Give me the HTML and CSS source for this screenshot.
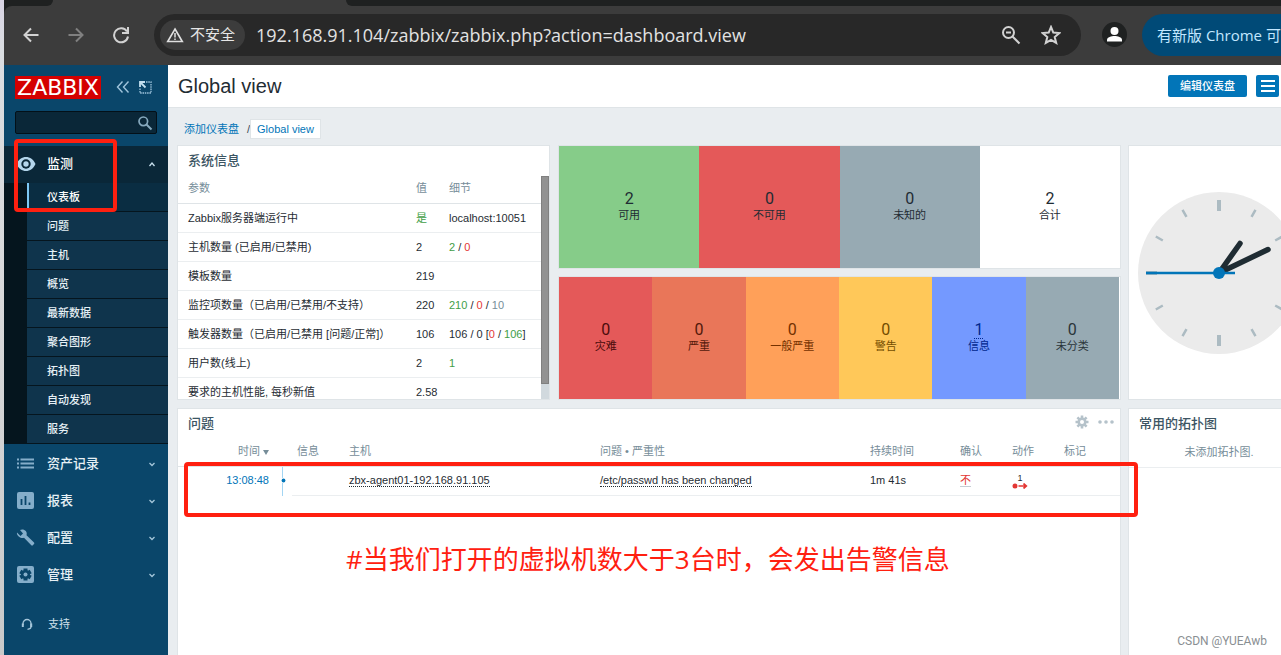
FILE: index.html
```html
<!DOCTYPE html>
<html lang="zh-CN">
<head>
<meta charset="utf-8">
<title>Global view</title>
<link rel="stylesheet" href="styles.css">
</head>
<body>
<div class="desktop">
<div class="behind"></div>
<div class="browser">
  <header class="chrome">
    <div class="tabstrip"><span class="tab-prev"></span><span class="tab-active"></span><span class="tab-rest"></span></div>
    <div class="toolbar">
      <div class="nav-buttons">
        <button class="icon-btn" aria-label="后退"><svg width="18" height="18" viewBox="0 0 18 18"><path d="M16.500 9H3M9 2.500L2.500 9L9 15.500" fill="none" stroke="#d2d2d2" stroke-width="2"/></svg></button>
        <button class="icon-btn" aria-label="前进"><svg width="18" height="18" viewBox="0 0 18 18"><path d="M1.500 9h13.500M9 2.500L15.500 9L9 15.500" fill="none" stroke="#808080" stroke-width="2"/></svg></button>
        <button class="icon-btn" aria-label="重新加载"><svg width="18" height="18" viewBox="0 0 18 18"><path d="M15 5.500A7 7 0 1 0 16 10.500" fill="none" stroke="#d2d2d2" stroke-width="2"/><path d="M16 1v6H10" fill="none" stroke="#d2d2d2" stroke-width="2"/></svg></button>
      </div>
      <div class="address">
        <button class="chip"><svg width="18" height="16" viewBox="0 0 18 16"><path d="M9 2L16.300 14.500H1.700Z" fill="none" stroke="#e0e0e0" stroke-width="1.600"/><path d="M9 6v4.500M9 11.500v1.500" stroke="#e0e0e0" stroke-width="1.500"/></svg><span>不安全</span></button>
        <span class="url">192.168.91.104/zabbix/zabbix.php?action=dashboard.view</span>
        <button class="icon-btn" aria-label="缩放"><svg width="20" height="20" viewBox="0 0 20 20"><g fill="none" stroke="#d2d2d2" stroke-width="2"><circle cx="7.500" cy="7.500" r="5.500"/><path d="M11.500 11.500l7 7"/><path d="M5 7.500h5"/></g></svg></button>
        <button class="icon-btn" aria-label="收藏"><svg width="20" height="20" viewBox="0 0 20 20"><path d="M10 2l2.300 5.600 6 .5-4.600 3.900 1.500 5.900L10 14.800 4.800 17.900l1.500-5.900L1.700 8.100l6-.5z" fill="none" stroke="#d2d2d2" stroke-width="2"/></svg></button>
      </div>
      <button class="icon-btn avatar" aria-label="个人资料"><svg width="25" height="25" viewBox="0 0 25 25"><circle cx="12.500" cy="12.500" r="12.500" fill="#1f2121"/><circle cx="12.500" cy="9" r="4" fill="#fff"/><path d="M5 19.500v-1.500c0-3 4.500-4 7.500-4s7.500 1 7.500 4v1.500z" fill="#fff"/></svg></button>
      <button class="update">有新版 Chrome 可</button>
    </div>
  </header>

  <div class="app">
    <aside class="sidebar">
      <div class="brand">
        <a class="logo" href="#">ZABBIX</a>
        <button class="icon-btn" aria-label="收起"><svg width="14" height="14" viewBox="0 0 14 14"><path d="M6.500 1.500L1.500 7l5 5.500M12.500 1.500L7.500 7l5 5.500" fill="none" stroke="#9fc4dc" stroke-width="1.400"/></svg></button>
        <button class="icon-btn" aria-label="隐藏"><svg width="13" height="13" viewBox="0 0 13 13"><path d="M7 1h5v11H1V7" fill="none" stroke="#9fc4dc" stroke-width="1.300" stroke-dasharray="1.500 .8"/><path d="M1 6V1H6" fill="none" stroke="#c4e0f0" stroke-width="1.800"/><path d="M1.500 1.500l5 5" stroke="#c4e0f0" stroke-width="1.800"/></svg></button>
      </div>
      <form class="search"><input type="text" aria-label="搜索"><button type="button" class="icon-btn" aria-label="搜索"><svg width="16" height="16" viewBox="0 0 16 16"><circle cx="6.300" cy="6.300" r="4.300" fill="none" stroke="#86a9be" stroke-width="1.700"/><path d="M9.500 9.500l5 5" stroke="#86a9be" stroke-width="2"/></svg></button></form>
      <nav class="menu">
        <div class="mark mark-menu"></div>
        <a class="item open" href="#"><svg class="ico" width="20" height="18" viewBox="0 0 20 18"><path d="M0.500 9C2.500 4.500 6 2 10 2s7.500 2.500 9.500 7c-2 4.500-5.500 7-9.500 7S2.500 13.500.5 9z" fill="#b4d6ec"/><circle cx="10" cy="9" r="4.700" fill="#0a2738"/><circle cx="10" cy="9" r="2.700" fill="#b4d6ec"/></svg><span>监测</span><svg class="arrow" width="8" height="6" viewBox="0 0 8 6"><path d="M1.500 5L4 2l2.500 3" fill="none" stroke="#c8e0ee" stroke-width="1.300"/></svg></a>
        <ul class="submenu">
          <li><a class="current" href="#">仪表板</a></li><li><a href="#">问题</a></li><li><a href="#">主机</a></li><li><a href="#">概览</a></li><li><a href="#">最新数据</a></li><li><a href="#">聚合图形</a></li><li><a href="#">拓扑图</a></li><li><a href="#">自动发现</a></li><li><a href="#">服务</a></li>
        </ul>
        <div class="rest">
        <a class="item" href="#"><svg class="ico" width="20" height="18" viewBox="0 0 20 18"><path d="M1 4.500h2M1 8.500h2M1 12.500h2M4.500 4.500H18M4.500 8.500H18M4.500 12.500H18" stroke="#85aeca" stroke-width="1.800"/></svg><span>资产记录</span><svg class="arrow" width="8" height="6" viewBox="0 0 8 6"><path d="M1.500 2L4 4.500 6.500 2" fill="none" stroke="#a5c6da" stroke-width="1.300"/></svg></a>
        <a class="item" href="#"><svg class="ico" width="20" height="18" viewBox="0 0 20 18"><rect x="1" y="0" width="17" height="17" rx="2" fill="#85aeca"/><path d="M5.500 7v6M9.500 4v9M13.500 10.500V13" stroke="#0a466a" stroke-width="1.800"/></svg><span>报表</span><svg class="arrow" width="8" height="6" viewBox="0 0 8 6"><path d="M1.500 2L4 4.500 6.500 2" fill="none" stroke="#a5c6da" stroke-width="1.300"/></svg></a>
        <a class="item" href="#"><svg class="ico" width="20" height="18" viewBox="0 0 20 18"><path d="M1 3.500L4.500 7 7 4.500 4 1c2-1 4.500-.5 5.800 1 1 1.300 1.200 2.700.7 4.200l7.500 7.300c.5.500.5 1 0 1.500l-1.200 1.300c-.5.500-1 .5-1.500 0L8 8.800c-1.600.6-3.600.2-5-1.100C1.500 6.500.5 5 1 3.500z" fill="#85aeca"/></svg><span>配置</span><svg class="arrow" width="8" height="6" viewBox="0 0 8 6"><path d="M1.500 2L4 4.500 6.500 2" fill="none" stroke="#a5c6da" stroke-width="1.300"/></svg></a>
        <a class="item" href="#"><svg class="ico" width="20" height="18" viewBox="0 0 20 18"><rect x="1" y="0" width="17" height="17" rx="2" fill="#85aeca"/><g stroke="#0a466a" stroke-width="4"><path d="M9.500 2.500v12M4.300 5.500l10.400 6M14.700 5.500l-10.400 6"/></g><circle cx="9.500" cy="8.500" r="4.500" fill="#0a466a"/><circle cx="9.500" cy="8.500" r="2" fill="#85aeca"/></svg><span>管理</span><svg class="arrow" width="8" height="6" viewBox="0 0 8 6"><path d="M1.500 2L4 4.500 6.500 2" fill="none" stroke="#a5c6da" stroke-width="1.300"/></svg></a>
        </div>
      </nav>
      <a class="support" href="#"><svg width="12" height="12" viewBox="0 0 12 12"><path d="M2 7V5.500a4 4 0 0 1 8 0V9c0 1.500-1 2-3.500 2.300" fill="none" stroke="#a5c6da" stroke-width="1.300"/><path d="M1.800 5.500v3.500M10.200 5.500v3.500" stroke="#a5c6da" stroke-width="2"/></svg><span>支持</span></a>
    </aside>

    <main class="main">
      <div class="page-head"><h1>Global view</h1><button class="primary">编辑仪表盘</button><button class="primary square" aria-label="菜单"><svg width="14" height="12" viewBox="0 0 14 12"><path d="M0 1h14M0 6h14M0 11h14" stroke="#fff" stroke-width="2"/></svg></button></div>
      <div class="crumbs"><a href="#">添加仪表盘</a><span class="slash">/</span><a class="selected" href="#">Global view</a></div>
      <div class="dashboard">
        <section class="card sysinfo">
          <h2>系统信息</h2>
          <div class="scroller">
            <table class="info">
              <thead><tr><th>参数</th><th class="val">值</th><th class="det">细节</th></tr></thead>
              <tbody>
                <tr><td>Zabbix服务器端运行中</td><td class="green">是</td><td>localhost:10051</td></tr>
                <tr><td>主机数量 (已启用/已禁用)</td><td>2</td><td><span class="green">2</span> / <span class="red">0</span></td></tr>
                <tr><td>模板数量</td><td>219</td><td></td></tr>
                <tr><td>监控项数量（已启用/已禁用/不支持）</td><td>220</td><td><span class="green">210</span> / <span class="red">0</span> / <span class="grey">10</span></td></tr>
                <tr><td>触发器数量（已启用/已禁用 [问题/正常]）</td><td>106</td><td>106 / 0 [<span class="red">0</span> / <span class="green">106</span>]</td></tr>
                <tr><td>用户数(线上)</td><td>2</td><td class="green">1</td></tr>
                <tr><td>要求的主机性能, 每秒新值</td><td>2.58</td><td></td></tr>
              </tbody>
            </table>
            <div class="track"><div class="thumb"></div></div>
          </div>
        </section>
        <div class="stats">
          <section class="card tiles hosts">
            <div class="tile ok"><b>2</b><span>可用</span></div><div class="tile bad"><b>0</b><span>不可用</span></div><div class="tile unknown"><b>0</b><span>未知的</span></div><div class="tile total"><b>2</b><span>合计</span></div>
          </section>
          <section class="card tiles severity">
            <div class="tile disaster"><b>0</b><span>灾难</span></div><div class="tile high"><b>0</b><span>严重</span></div><div class="tile average"><b>0</b><span>一般严重</span></div><div class="tile warning"><b>0</b><span>警告</span></div><div class="tile information"><b><a href="#">1</a></b><span>信息</span></div><div class="tile none"><b>0</b><span>未分类</span></div>
          </section>
        </div>
        <section class="card clock">
          <svg width="162" height="162" viewBox="-81 -81 162 162"><circle r="81" fill="#ebebeb"/>
            <g stroke="#acbbc2" stroke-width="4"><path d="M0-73V-62M0 73V62M-73 0H-62M73 0H62"/></g>
            <g stroke="#acbbc2" stroke-width="2.500"><path d="M36.500-63.200l-4 7M63.200-36.500l-7 4M63.200 36.500l-7-4M36.500 63.200l-4-7M-36.500 63.200l4-7M-63.200 36.500l7-4M-63.200-36.500l7 4M-36.500-63.200l4 7"/></g>
            <path d="M0 0L21-29.500M0 0L49-23.500" stroke="#1f2c33" stroke-width="5.500" stroke-linecap="round"/>
            <path d="M-73 0H16" stroke="#0275b8" stroke-width="2.500"/><circle r="6" fill="#0275b8"/></svg>
        </section>
        <section class="card problems">
          <div class="card-head"><h2>问题</h2>
            <button class="icon-btn" aria-label="设置"><svg width="14" height="14" viewBox="0 0 14 14"><g stroke="#b5c2ca" stroke-width="2.600"><path d="M7 .5v13M.5 7h13M2.400 2.400l9.200 9.200M11.600 2.400l-9.200 9.200"/></g><circle cx="7" cy="7" r="4.500" fill="#b5c2ca"/><circle cx="7" cy="7" r="2" fill="#fff"/></svg></button>
            <button class="icon-btn" aria-label="更多"><svg width="16" height="4" viewBox="0 0 16 4"><g fill="#b5c2ca"><circle cx="2" cy="2" r="1.800"/><circle cx="8" cy="2" r="1.800"/><circle cx="14" cy="2" r="1.800"/></g></svg></button>
          </div>
          <table class="events">
            <colgroup><col class="c-time"><col class="c-line"><col class="c-info"><col class="c-host"><col class="c-problem"><col class="c-age"><col class="c-ack"><col class="c-act"><col></colgroup>
            <thead><tr><th class="time">时间<span class="sort"></span></th><th></th><th>信息</th><th>主机</th><th>问题 • 严重性</th><th>持续时间</th><th>确认</th><th>动作</th><th>标记</th></tr></thead>
            <tbody><tr><td class="time"><a class="blue" href="#">13:08:48</a></td><td class="line"><svg width="5" height="29" viewBox="0 0 5 29"><path d="M1.500 0v29" stroke="#a3d5f3"/><circle cx="2.500" cy="13.500" r="2.700" fill="#fff"/><circle cx="2.500" cy="13.500" r="1.900" fill="#0275b8"/></svg></td><td></td><td><a class="dotted" href="#">zbx-agent01-192.168.91.105</a></td><td><a class="dotted" href="#">/etc/passwd has been changed</a></td><td>1m 41s</td><td><a class="ack" href="#">不</a></td><td><div class="action"><span class="count">1</span><svg width="16" height="6" viewBox="0 0 16 6"><circle cx="3" cy="3" r="2.500" fill="#e33734"/><path d="M6.500 3h7M11.500 .5L14.300 3l-2.800 2.500" fill="none" stroke="#e33734" stroke-width="1.700"/></svg></div></td><td></td></tr></tbody>
          </table>
          <div class="mark mark-event"></div>
          <p class="note">#当我们打开的虚拟机数大于3台时，会发出告警信息</p>
        </section>
        <section class="card maps"><h2>常用的拓扑图</h2><p class="empty">未添加拓扑图.</p></section>
      </div>
      <div class="credit">CSDN @YUEAwb</div>
    </main>
  </div>
</div>
</div>
</body>
</html>
```
FILE: styles.css
```css
* { box-sizing: border-box; }
body { margin: 0; font: 11px/14px "Liberation Sans", "Noto Sans CJK SC", sans-serif; color: #1f2c33; }
h1, h2, p, ul { margin: 0; padding: 0; font-weight: normal; }
ul { list-style: none; }
a { color: inherit; text-decoration: none; }
button, input { font: inherit; border: 0; padding: 0; background: none; color: inherit; }
svg { display: block; }
.icon-btn { flex: none; display: flex; }
.desktop { display: flex; height: 100vh; overflow: hidden; }
.behind { flex: none; width: 4px; background: linear-gradient(#d9d4e4 0, #dadde1 50px, #d8d8da 300px, #c9c9c9 100%); }
.browser { flex: 1; min-width: 0; display: flex; flex-direction: column; background: #1f2121; }

.tabstrip { display: flex; height: 6px; background: #3c3c3c; }
.tab-prev { width: 49px; background: #1f2121; border-bottom-right-radius: 6px; }
.tab-active { width: 293px; }
.tab-rest { flex: 1; background: #1f2121; border-bottom-left-radius: 6px; }
.toolbar { display: flex; align-items: center; height: 59px; background: #3c3c3c; border-radius: 8px 0 0 0; padding: 0 0 2px 18px; }
.nav-buttons { display: flex; gap: 27px; width: 132px; }
.address { flex: 1; min-width: 0; display: flex; align-items: center; height: 42px; border-radius: 21px; background: #282828; padding: 0 20px 0 6px; gap: 20px; }
.chip { display: flex; align-items: center; gap: 6px; height: 30px; width: 85px; padding-left: 6px; border-radius: 15px; background: #3c3c3c; color: #e6e6e6; font-size: 15px; white-space: nowrap; }
.url { flex: 1; margin-left: -9px; color: #e2e2e2; font: 18px/24px "Open Sans", sans-serif; white-space: nowrap; overflow: hidden; }
.avatar { margin: 0 15px 0 21px; }
.update { flex: none; width: 139px; height: 42px; padding-left: 15px; border-radius: 21px 0 0 21px; background: #004a77; color: #c2e7ff; font: 15px/20px "Open Sans", "Noto Sans CJK SC", sans-serif; text-align: left; white-space: nowrap; overflow: hidden; }

.app { flex: 1; min-height: 0; display: flex; }
.sidebar { flex: none; width: 164px; background: #0a466a; color: #e6f0f5; }
.brand { display: flex; align-items: center; height: 46px; padding: 0 11px 2px; gap: 9px; }
.logo { width: 86px; height: 23px; margin-right: 6px; background: #d40000; color: #fff; font: 22px/23px "DejaVu Sans", sans-serif; text-align: center; }
.search { display: flex; align-items: center; height: 23px; margin: 0 11px 12px; padding-right: 3px; background: #0a2738; border: 1px solid #031018; border-radius: 2px; }
.search input { flex: 1; min-width: 0; outline: 0; }
.menu { position: relative; }
.item { display: flex; align-items: center; height: 37px; padding: 0 12px; font-size: 13px; font-weight: 500; }
.item span { flex: 1; margin-left: 11px; }
.open { background: #0a2738; color: #fff; padding-bottom: 2px; }
.submenu { padding-left: 23px; background: #05151e; font-weight: 500; }
.submenu a { display: block; height: 29px; padding-left: 20px; line-height: 28px; background: #0f344c; border-bottom: 1px solid #05151e; }
.submenu .current { background: #0a2d42; border-left: 2px solid #7dc8f5; padding-left: 18px; color: #fff; }
.rest { display: flex; flex-direction: column; padding-top: 1px; }
.support { display: flex; align-items: center; gap: 15px; height: 22px; margin: 20px 17px; color: #cfe0ea; }
.mark { position: absolute; border: 4px solid #ff2010; border-radius: 4px; }
.mark-menu { left: 10px; top: -7px; width: 103px; height: 73px; }

.main { position: relative; flex: 1; min-width: 0; display: flex; flex-direction: column; background: #e9edf0; overflow: hidden; }
.page-head { display: flex; align-items: center; gap: 9px; height: 43px; padding: 0 2px 0 10px; background: #fff; border-bottom: 1px solid #dfe4e7; }
.page-head h1 { flex: 1; font-size: 20px; line-height: 24px; }
.primary { height: 22px; width: 79px; background: #0275b8; border-radius: 2px; color: #fff; font-weight: 500; }
.square { width: 23px; display: flex; align-items: center; justify-content: center; }
.crumbs { display: flex; align-items: center; height: 37px; padding: 5px 16px 0; color: #0275b8; }
.slash { margin: 0 0 0 8px; color: #3c4b55; }
.selected { height: 20px; padding: 0 6px; line-height: 18px; background: #fff; border: 1px solid #dfe4e7; }
.dashboard { flex: 1; display: grid; grid-template-columns: minmax(373px, 2fr) minmax(564px, 3fr) minmax(182px, 1fr); grid-template-rows: 255px 1fr; gap: 8px 7px; padding-left: 9px; }
.card { background: #fff; border: 1px solid #dfe4e7; min-width: 0; }
.card h2 { padding-left: 10px; font-size: 13px; line-height: 30px; color: #3c5563; font-weight: 500; }
.sysinfo { display: flex; flex-direction: column; overflow: hidden; }
.scroller { flex: 1; min-height: 0; display: flex; overflow: hidden; }
.info { flex: 1; border-collapse: collapse; align-self: flex-start; }
.info tr { height: 29px; }
th { font-weight: normal; text-align: left; color: #768d99; }
.info th, .info td { padding: 0 0 0 10px; border-bottom: 1px solid #ebeef0; white-space: nowrap; }
.info thead tr { height: 27px; }
.info th { padding-bottom: 2px; border-bottom: 1px solid #dfe4e7; }
.info .val { width: 33px; }
.info .det { width: 102px; }
.green { color: #429e47; }
.red { color: #e33734; }
.grey { color: #768d99; }
.track { width: 8px; background: #d1d9de; }
.thumb { height: 208px; background: #929292; border: 1px solid #808080; }
.stats { display: grid; grid-template-rows: 1fr 1fr; gap: 7px; margin-left: 1px; }
.tiles { display: grid; grid-auto-flow: column; grid-auto-columns: 1fr; }
.severity { padding-right: 1px; }
.tile { display: flex; flex-direction: column; align-items: center; justify-content: center; padding-bottom: 2px; }
.tile b { font: 16px/19px "Roboto", sans-serif; }
.tile span { line-height: 15px; }
.ok { background: #86cc89; }
.bad { background: #e45959; }
.unknown { background: #97aab3; }
.disaster { background: #e45959; color: #4b0c0c; }
.high { background: #e97659; color: #52190b; }
.average { background: #ffa059; color: #733100; }
.warning { background: #ffc859; color: #734d00; }
.information { background: #7499ff; color: #00268e; }
.information a { display: block; height: 19px; border-bottom: 1px dotted #00268e; }
.none { background: #97aab3; color: #2a353a; }
.clock { display: flex; align-items: center; justify-content: center; }
.problems { position: relative; grid-column: span 2; }
.problems, .maps { border-bottom: 0; }
.card-head { display: flex; align-items: center; padding-right: 6px; gap: 9px; }
.card-head h2 { flex: 1; }
.card-head .icon-btn { padding-bottom: 4px; }
.events { width: 100%; table-layout: fixed; border-collapse: collapse; }
.events th { height: 27px; padding: 0 5px 2px; border-bottom: 1px solid #dfe4e7; white-space: nowrap; }
.events td { height: 29px; padding: 0 5px 2px; border-bottom: 1px solid #ebeef0; }
.events .time { text-align: right; padding-right: 7px; }
.events td.time { border: 0; }
.events td.line { padding: 0 5px; border: 0; }
.sort { display: inline-block; margin-left: 3px; border: 3px solid transparent; border-top: 5px solid #768d99; border-bottom: 0; }
.c-time { width: 98px; }
.c-line { width: 16px; }
.c-info, .c-ack, .c-act { width: 52px; }
.c-host { width: 251px; }
.c-problem { width: 270px; }
.c-age { width: 90px; }
.blue { color: #0275b8; }
.dotted { border-bottom: 1px dotted #1f2c33; }
.ack { color: #e33734; border-bottom: 1px solid #c5cdd3; }
.action { width: 16px; padding-top: 3px; text-align: center; }
.count { display: block; font-size: 9px; line-height: 10px; }
.mark-event { left: 6px; top: 53px; right: -18px; height: 55px; z-index: 1; }
.note { padding: 45px 0 0 168px; color: #ff2010; font: 26px/36px "Open Sans", "Noto Sans CJK SC", sans-serif; white-space: nowrap; }
.empty { height: 29px; line-height: 26px; text-align: center; color: #768d99; border-bottom: 1px solid #ebeef0; }
.credit { position: absolute; right: 14px; bottom: 6px; color: #8a8f93; font: 12px/16px "Roboto", sans-serif; }
```
